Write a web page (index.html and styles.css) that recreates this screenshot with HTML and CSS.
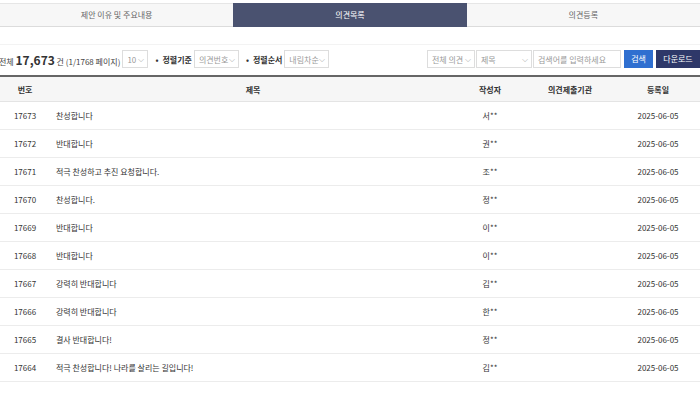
FILE: index.html
```html
<!DOCTYPE html>
<html>
<head>
    <meta charset="UTF-8">
    <title>의견목록</title>
    <link rel="stylesheet" href="styles.css">
</head>
<body>
    <div class="tabs">
        <div class="tab">제안 이유 및 주요내용</div>
        <div class="tab active">의견목록</div>
        <div class="tab">의견등록</div>
    </div>

    <div class="toolbar">
        <div class="left">
            <span class="total">전체 <b>17,673</b> 건 (1/1768 페이지)</span>
            <span class="sel w-num">10 <i>⌵</i></span>
            <span class="label">정렬기준</span>
            <span class="sel w-sort">의견번호 <i>⌵</i></span>
            <span class="label">정렬순서</span>
            <span class="sel w-sort">내림차순 <i>⌵</i></span>
        </div>
        <div class="right">
            <span class="sel w-kind">전체 의견 <i>⌵</i></span>
            <span class="sel w-field">제목 <i>⌵</i></span>
            <span class="sel w-input">검색어를 입력하세요</span>
            <span class="btn blue">검색</span>
            <span class="btn navy">다운로드</span>
        </div>
    </div>

    <table class="list">
        <thead>
            <tr>
                <th class="c-no">번호</th>
                <th class="c-title">제목</th>
                <th class="c-writer">작성자</th>
                <th class="c-org">의견제출기관</th>
                <th class="c-date">등록일</th>
            </tr>
        </thead>
        <tbody>
            <tr><td>17673</td><td class="t">찬성합니다</td><td>서**</td><td></td><td>2025-06-05</td></tr>
            <tr><td>17672</td><td class="t">반대합니다</td><td>권**</td><td></td><td>2025-06-05</td></tr>
            <tr><td>17671</td><td class="t">적극 찬성하고 추진 요청합니다.</td><td>조**</td><td></td><td>2025-06-05</td></tr>
            <tr><td>17670</td><td class="t">찬성합니다.</td><td>정**</td><td></td><td>2025-06-05</td></tr>
            <tr><td>17669</td><td class="t">반대합니다</td><td>이**</td><td></td><td>2025-06-05</td></tr>
            <tr><td>17668</td><td class="t">반대합니다</td><td>이**</td><td></td><td>2025-06-05</td></tr>
            <tr><td>17667</td><td class="t">강력히 반대합니다</td><td>김**</td><td></td><td>2025-06-05</td></tr>
            <tr><td>17666</td><td class="t">강력히 반대합니다</td><td>한**</td><td></td><td>2025-06-05</td></tr>
            <tr><td>17665</td><td class="t">결사 반대합니다!</td><td>정**</td><td></td><td>2025-06-05</td></tr>
            <tr><td>17664</td><td class="t">적극 찬성합니다! 나라를 살리는 길입니다!</td><td>김**</td><td></td><td>2025-06-05</td></tr>
        </tbody>
    </table>
</body>
</html>
```

FILE: styles.css
```css
body {
    margin: 0;
    width: 700px;
    font-family: "Noto Sans CJK KR", "Noto Sans", sans-serif;
    font-size: 8px;
    color: #333;
    background-color: #fff;
}
.tabs {
    display: flex;
    margin-top: 3px;
}
.tab {
    flex: 1;
    height: 22px;
    line-height: 22px;
    text-align: center;
    background-color: #f7f7f7;
    border-top: 1px solid #e6e6e6;
    border-bottom: 1px solid #dcdcdc;
    color: #666;
}
.tab.active {
    background-color: #4a5270;
    border-color: #4a5270;
    color: #fff;
}
.toolbar {
    display: flex;
    justify-content: space-between;
    align-items: center;
    margin-top: 17px;
    border-top: 1px solid #f3f3f3;
    padding: 5px 0 7px;
}
.left, .right {
    display: flex;
    align-items: center;
}
.total {
    margin-left: -1px;
    color: #444;
}
.total b {
    font-size: 12px;
    font-weight: bold;
    color: #333;
}
.sel {
    display: inline-block;
    position: relative;
    height: 18px;
    line-height: 17px;
    padding: 0 4px;
    border: 1px solid #ddd;
    color: #999;
    box-sizing: border-box;
}
.sel i {
    font-style: normal;
    position: absolute;
    right: 3px;
    top: -1px;
    color: #aaa;
}
.w-num { width: 26px; margin-left: 2px; }
.w-sort { width: 45px; }
.w-kind { width: 48px; margin-right: 1px; }
.w-field { width: 56px; margin-right: 1px; }
.w-input { width: 88px; }
.label {
    font-weight: bold;
    color: #333;
    margin: 0 2px 0 7px;
}
.label::before {
    content: "•";
    margin-right: 4px;
}
.btn {
    display: inline-block;
    height: 18px;
    line-height: 18px;
    color: #fff;
    margin-left: 3px;
    text-align: center;
}
.blue { background-color: #2f6fd0; width: 29px; }
.navy { background-color: #2e3869; width: 44px; }
.list {
    width: 700px;
    border-collapse: collapse;
    table-layout: fixed;
}
.list th {
    height: 24px;
    padding: 0;
    background-color: #f6f6f6;
    border-top: 2px solid #666;
    border-bottom: 1px solid #e4e4e4;
    font-weight: bold;
    color: #333;
}
.c-no { width: 50px; }
.c-title { width: 406px; }
.c-writer { width: 68px; }
.c-org { width: 92px; }
.c-date { width: 84px; }
.list td {
    height: 27px;
    text-align: center;
    border-bottom: 1px solid #ececec;
    padding: 0;
}
.list td.t {
    text-align: left;
    padding-left: 6px;
}
```
